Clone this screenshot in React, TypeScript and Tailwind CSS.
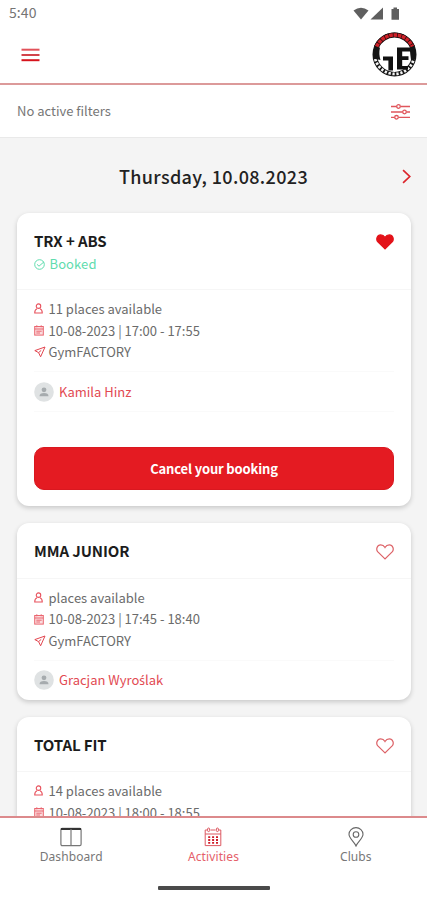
import React from "react";

interface Activity {
  title: string;
  booked?: boolean;
  favourite?: boolean;
  places: string;
  date: string;
  club: string;
  trainer: string;
}

const activities: Activity[] = [
  {
    title: "TRX + ABS",
    booked: true,
    favourite: true,
    places: "11 places available",
    date: "10-08-2023 | 17:00 - 17:55",
    club: "GymFACTORY",
    trainer: "Kamila Hinz",
  },
  {
    title: "MMA JUNIOR",
    places: "places available",
    date: "10-08-2023 | 17:45 - 18:40",
    club: "GymFACTORY",
    trainer: "Gracjan Wyroślak",
  },
  {
    title: "TOTAL FIT",
    places: "14 places available",
    date: "10-08-2023 | 18:00 - 18:55",
    club: "GymFACTORY",
    trainer: "Kamila Hinz",
  },
];

const StatusBar = () => (
  <div className="flex h-[27px] shrink-0 items-center justify-between pl-[9px] pr-[27px] text-[#757575]">
    <span className="pb-[3px] text-[14px] leading-none tracking-[0.1px]">5:40</span>
    <svg width="47" height="14" viewBox="0 0 47 14" fill="#5f5f5f">
      <path d="M0.5 3.6 Q8 -2.2 15.5 3.6 L8 12.6 Z" />
      <path d="M30 0.5 V12.5 H17.5 Z" />
      <path d="M38.5 2 h2 V0.6 h3.5 V2 h2 V12.8 h-7.5 Z" />
    </svg>
  </div>
);

const Logo = () => (
  <svg width="46" height="46" viewBox="0 0 46 46">
    <circle cx="23.5" cy="22.5" r="19.7" fill="#fff" stroke="#151515" strokeWidth="4.6" />
    <path d="M5.4 15 A19.7 19.7 0 0 1 41.6 15" fill="none" stroke="#1b0d0e" strokeWidth="5" />
    <path d="M5.6 14.6 A19.6 19.6 0 0 1 41.4 14.6" fill="none" stroke="#cf2028" strokeWidth="3.6" strokeDasharray="3.6 0.7" />
    <path d="M4.3 27 A19.8 19.8 0 0 0 42.7 27" fill="none" stroke="#f4f4f4" strokeWidth="2.8" strokeDasharray="2.3 1.7" />
    <path d="M4 15.5 H9 Q7.5 22 9.5 28 L4.5 27 Z" fill="#151515" />
    <path d="M38.5 15.5 H43.5 V28 H40 Z" fill="#151515" />
    <path d="M12 24.5 H22 V38.4 H17.4 V28.4 H12 Z" fill="#111" />
    <path d="M26 15.5 H39 V19.4 H31.2 V24.3 H37.5 V28 H31.2 V34 H37 V37.5 H26 Z" fill="#111" />
  </svg>
);

const Header = () => (
  <header className="flex h-[58px] shrink-0 items-center justify-between border-b-2 border-[#dc9a9a] pl-[21px] pr-[10px]">
    <svg width="19" height="14" viewBox="0 0 19 14" strokeWidth="2" className="mt-[-1px]">
      <path d="M0.5 1.7 H18.5" stroke="#e2525a" />
      <path d="M0.5 7 H18.5" stroke="#d2434a" />
      <path d="M0.5 12.2 H18.5" stroke="#d6131c" />
    </svg>
    <Logo />
  </header>
);

const FilterBar = () => (
  <div className="flex h-[53px] shrink-0 items-center justify-between border-b border-[#e9e9e9] bg-white pl-[17px] pr-[17px]">
    <span className="text-[13px] text-[#767676]">No active filters</span>
    <svg width="19" height="16" viewBox="0 0 19 16" fill="none" stroke="#e0565c" strokeWidth="1.3" className="mt-px">
      <path d="M0 2.5 H5.5 M9.5 2.5 H19 M0 8 H11.5 M15.5 8 H19 M0 13.3 H3.5 M7.5 13.3 H19" />
      <circle cx="7.5" cy="2.5" r="1.8" />
      <circle cx="13.5" cy="8" r="1.8" />
      <circle cx="5.5" cy="13.3" r="1.8" />
    </svg>
  </div>
);

const Heart = ({ filled }: { filled?: boolean }) => (
  <svg width="18" height="16" viewBox="0 0 19 17" className="mt-[5px]">
    <path
      d="M9.5 15.8 L1.9 8.4 C-0.4 5.8 1 1 4.9 1 C7.2 1 8.6 2.2 9.5 3.7 C10.4 2.2 11.8 1 14.1 1 C18 1 19.4 5.8 17.1 8.4 Z"
      fill={filled ? "#e31219" : "none"}
      stroke={filled ? "#e31219" : "#dd6267"}
      strokeWidth="1.3"
    />
  </svg>
);

const UserIcon = () => (
  <svg width="9" height="11" viewBox="0 0 10 12" fill="none" stroke="#e8525d" strokeWidth="1.2">
    <circle cx="5" cy="3.4" r="2.5" />
    <path d="M3.3 6.2 Q0.8 7.2 0.8 11 H9.2 Q9.2 7.2 6.7 6.2" />
  </svg>
);

const DateIcon = () => (
  <svg width="10" height="11" viewBox="0 0 10 11" fill="none" stroke="#ea6670" strokeWidth="1">
    <rect x="0.7" y="1.5" width="8.6" height="8.6" fill="#fbdcde" />
    <path d="M0.7 4 H9.3 M2.8 0.3 V2.3 M7.2 0.3 V2.3 M2.3 6.2 H7.7 M2.3 8 H6" />
  </svg>
);

const PlaceIcon = () => (
  <svg width="12" height="12" viewBox="0 0 12 12" fill="none" stroke="#e2454f" strokeWidth="1" strokeLinejoin="round">
    <path d="M11 1 L0.8 4.6 L4.6 6.6 L6.6 10.8 Z M4.6 6.6 L7.2 4.4" />
  </svg>
);

const InfoRow = ({ icon, children }: { icon: React.ReactNode; children: React.ReactNode }) => (
  <div className="flex h-[21.7px] items-center text-[13px] text-[#6b6b6b]">
    <span className="flex w-[14.5px] shrink-0">{icon}</span>
    <span className="whitespace-nowrap">{children}</span>
  </div>
);

// The CJK family places Polish accents badly, so those letters use Noto Sans
const TrainerName = ({ name }: { name: string }) => (
  <span className="ml-[5px] text-[13px] leading-5 text-[#e24a52]">
    {name.split(/([^ -~])/).map((part, i) =>
      i % 2 ? (
        <span key={i} className="font-['Noto_Sans',sans-serif] text-[12px]">{part}</span>
      ) : (
        part
      )
    )}
  </span>
);

const ActivityCard = ({ activity }: { activity: Activity }) => (
  <div className="shrink-0 rounded-xl bg-white shadow-[0_2px_5px_rgba(0,0,0,0.18)]">
    <div className={`flex items-start justify-between border-b border-[#f6f6f6] px-[17px] pt-4 ${activity.booked ? "h-[77px]" : "h-[55.5px]"}`}>
      <div>
        <h2 className="text-[15px] leading-6 font-bold tracking-[-0.1px] text-[#1c1c1c]">{activity.title}</h2>
        {activity.booked && (
          <div className="flex h-[22px] items-center text-[13px] tracking-[0.1px] text-[#5fdcae]">
            <svg width="11" height="11" viewBox="0 0 11 11" fill="none" stroke="currentColor" className="mr-[4.5px]">
              <circle cx="5.5" cy="5.5" r="4.8" />
              <path d="M3 5.3 L5 7.2 L10 2.8" />
            </svg>
            Booked
          </div>
        )}
      </div>
      <Heart filled={activity.favourite} />
    </div>
    <div className="mx-[17px] border-b border-[#fafafa] pt-2 pb-[8px]">
      <InfoRow icon={<UserIcon />}>{activity.places}</InfoRow>
      <InfoRow icon={<DateIcon />}>{activity.date}</InfoRow>
      <InfoRow icon={<PlaceIcon />}>{activity.club}</InfoRow>
    </div>
    <div className="mx-[17px] flex h-[39px] items-center">
      <svg width="20" height="20" viewBox="0 0 20 20">
        <circle cx="10" cy="10" r="9.8" fill="#dfe2e3" />
        <circle cx="10" cy="7.8" r="2.4" fill="#a6abae" />
        <path d="M5.5 14.2 Q5.5 10.9 10 10.9 Q14.5 10.9 14.5 14.2 Z" fill="#a6abae" />
      </svg>
      <TrainerName name={activity.trainer} />
    </div>
    {activity.booked && (
      <div className="mx-[17px] border-t border-[#fafafa] pt-[35px] pb-4">
        <button className="flex h-[43px] w-full items-center justify-center rounded-[10px] border border-[#d91820] bg-[#e41b22] text-[13px] font-bold tracking-[-0.15px] text-white">
          Cancel your booking
        </button>
      </div>
    )}
  </div>
);

const BottomNav = () => (
  <nav className="h-[84px] shrink-0 border-t-2 border-[#dc8a8c] bg-white font-['Noto_Sans',sans-serif] text-[12px] leading-4 text-[#777]">
    <div className="grid h-[62px] grid-cols-3 pt-[9px]">
      <div className="flex flex-col items-center tracking-[0.1px]">
        <svg width="22" height="20" viewBox="0 0 22 20" fill="none" stroke="#777" strokeWidth="1.2" className="mb-[2px]">
          <rect x="0.9" y="1.4" width="20.2" height="17.2" rx="1.3" />
          <path d="M1 2 H21" stroke="#333" strokeWidth="2" />
          <path d="M11 2 V18.5" />
        </svg>
        Dashboard
      </div>
      <div className="flex flex-col items-center tracking-[0.1px] text-[#e5606a]">
        <svg width="18" height="20" viewBox="0 0 18 20" fill="none" stroke="#dd5962" className="mb-[2px]">
          <path d="M3.5 3 H1.2 V18.6 H16.8 V3 H14.5 M6.5 3 H11.5 M1.2 7 H16.8" />
          <rect x="3.6" y="1" width="2" height="3.6" rx="1" />
          <rect x="12.4" y="1" width="2" height="3.6" rx="1" />
          <path d="M4.2 10.2 H14 M4.2 13 H14 M4.2 15.8 H14" stroke="#cf1c29" strokeWidth="1.8" strokeDasharray="2 1.9" />
        </svg>
        Activities
      </div>
      <div className="flex flex-col items-center tracking-[0.1px]">
        <svg width="16" height="20" viewBox="0 0 16 20" fill="none" stroke="#666" strokeWidth="1.1" className="mb-[2px]">
          <path d="M8 19 C6.5 15 1 11.5 1 7.3 A7 6.7 0 0 1 15 7.3 C15 11.5 9.5 15 8 19 Z" />
          <circle cx="8" cy="7.5" r="2.8" />
        </svg>
        Clubs
      </div>
    </div>
    <div className="mx-auto mt-[6px] h-[4px] w-[112px] rounded-[1px] bg-[#4a4a4a]" />
  </nav>
);

const App: React.FC = () => (
  <div className="flex h-[900px] w-[427px] flex-col overflow-hidden bg-white font-['Noto_Sans_CJK_SC','Noto_Sans',sans-serif]">
    <StatusBar />
    <Header />
    <FilterBar />
    <main className="min-h-0 flex-1 overflow-hidden bg-[#f4f4f4]">
      <div className="grid h-[75px] grid-cols-[1fr_auto_1fr] items-center pr-[16px] pl-[16px]">
        <span />
        <h1 className="pt-px text-[18px] font-medium tracking-[0.35px] text-[#222]">Thursday, 10.08.2023</h1>
        <svg width="9" height="15" viewBox="0 0 10 16" fill="none" stroke="#dc252c" strokeWidth="1.9" className="mt-[1px] justify-self-end">
          <path d="M1.2 1 L8.6 8 L1.2 15" />
        </svg>
      </div>
      <div className="flex flex-col gap-[17px] pr-4 pl-[17px]">
        {activities.map((activity) => (
          <ActivityCard key={activity.title} activity={activity} />
        ))}
      </div>
    </main>
    <BottomNav />
  </div>
);

export default App;
